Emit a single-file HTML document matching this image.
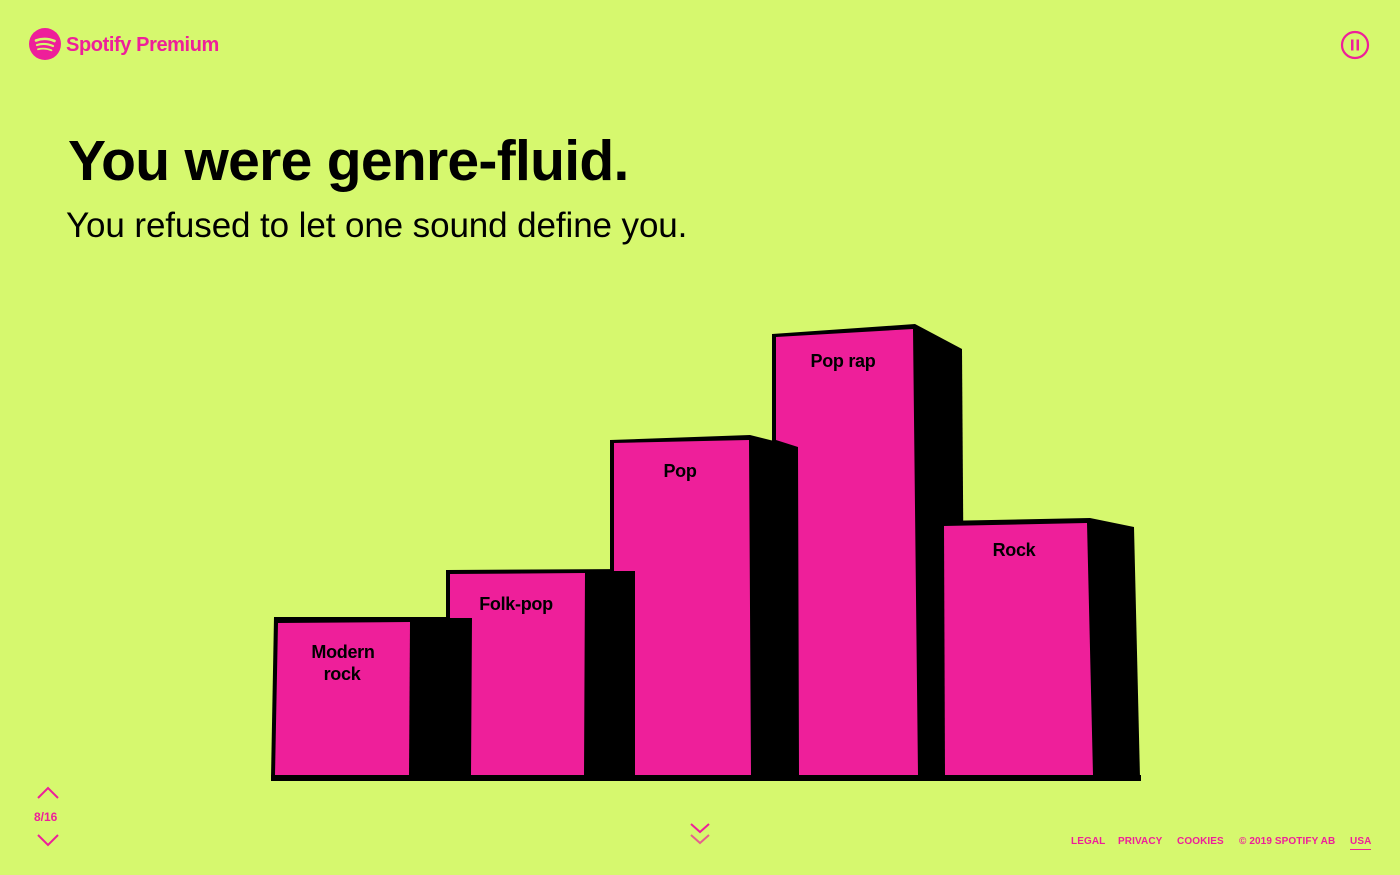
<!DOCTYPE html>
<html><head><meta charset="utf-8"><style>
html,body{margin:0;padding:0;}
body{width:1400px;height:875px;background:#d6f86e;position:relative;overflow:hidden;font-family:"Liberation Sans",sans-serif;}
.abs{position:absolute;}
h1{position:absolute;left:68px;top:128px;margin:0;font-size:57px;font-weight:bold;letter-spacing:-0.7px;color:#000;white-space:nowrap;}
h2{position:absolute;left:66px;top:206px;margin:0;font-size:35px;font-weight:normal;letter-spacing:-0.1px;color:#000;white-space:nowrap;}
.foot{position:absolute;top:836px;font-size:10px;font-weight:bold;color:#ee1f9a;letter-spacing:0.1px;}
</style></head><body>
<svg class="abs" style="left:29px;top:28px" width="34" height="34" viewBox="0 0 34 34">
<circle cx="16" cy="16" r="16" fill="#ee1f9a"/>
<path d="M7 12.5 Q16 9 25.5 13" stroke="#d6f86e" stroke-width="2.6" fill="none" stroke-linecap="round"/>
<path d="M8 17 Q16 14.5 24 18" stroke="#d6f86e" stroke-width="2.2" fill="none" stroke-linecap="round"/>
<path d="M9 21.3 Q16 19.5 22.5 22.3" stroke="#d6f86e" stroke-width="1.8" fill="none" stroke-linecap="round"/>
</svg>
<div class="abs" style="left:66px;top:34px;font-size:20px;font-weight:bold;color:#ee1f9a;letter-spacing:-0.4px;">Spotify Premium</div>
<svg class="abs" style="left:1340px;top:30px" width="30" height="30" viewBox="0 0 30 30">
<circle cx="15" cy="15" r="13" stroke="#ee1f9a" stroke-width="2.2" fill="none"/>
<rect x="11" y="9.5" width="2.5" height="11" fill="#ee1f9a"/><rect x="16.5" y="9.5" width="2.5" height="11" fill="#ee1f9a"/>
</svg>
<h1>You were genre-fluid.</h1>
<h2>You refused to let one sound define you.</h2>
<svg class="abs" style="left:0;top:0" width="1400" height="875" viewBox="0 0 1400 875">
<g fill="#000">
<polygon points="274,617 472,617 472,778 271,778"/>
<polygon points="446,570 636,569 636,778 446,778"/>
<polygon points="610,440 750,435 798,447 798,778 610,778"/>
<polygon points="772,334 915,324 962,349 965,778 772,778"/>
<polygon points="940,521 1090,518 1134,527 1140,778 940,778"/>
<rect x="271" y="775" width="870" height="6"/>
</g>
<g fill="#ee1f9a">
<polygon points="278,623 410,622 409,775 275,775"/>
<polygon points="450,574 585,573 584,775 471,775 472,618 450,618"/>
<polygon points="614,443 749,440 751,775 635,775 635,571 614,571"/>
<polygon points="776,337 913,329 918,775 799,775 798,447 776,440"/>
<polygon points="944,526 1087,523 1093,775 945,775"/>
</g>
<g font-family="Liberation Sans,sans-serif" font-size="18" font-weight="bold" fill="#000" text-anchor="middle" letter-spacing="-0.3">
<text x="343" y="658">Modern</text><text x="342" y="680">rock</text>
<text x="516" y="610">Folk-pop</text>
<text x="680" y="477">Pop</text>
<text x="843" y="367">Pop rap</text>
<text x="1014" y="556">Rock</text>
</g>
<g stroke="#ee1f9a" stroke-width="2" fill="none">
<path d="M38 798 L48 788 L58 798"/>
<path d="M38 835 L48 845 L58 835"/>
<path d="M691 824 L700 832 L709 824"/>
<path d="M691 835 L700 843 L709 835" opacity="0.7"/>
</g>
</svg>
<div class="abs" style="left:34px;top:810px;font-size:12px;font-weight:bold;color:#ee1f9a;">8/16</div>
<div class="foot" style="left:1071px">LEGAL</div>
<div class="foot" style="left:1118px">PRIVACY</div>
<div class="foot" style="left:1177px">COOKIES</div>
<div class="foot" style="left:1239px">© 2019 SPOTIFY AB</div>
<div class="foot" style="left:1350px;border-bottom:1px solid #ee1f9a;padding-bottom:2px">USA</div>
</body></html>
